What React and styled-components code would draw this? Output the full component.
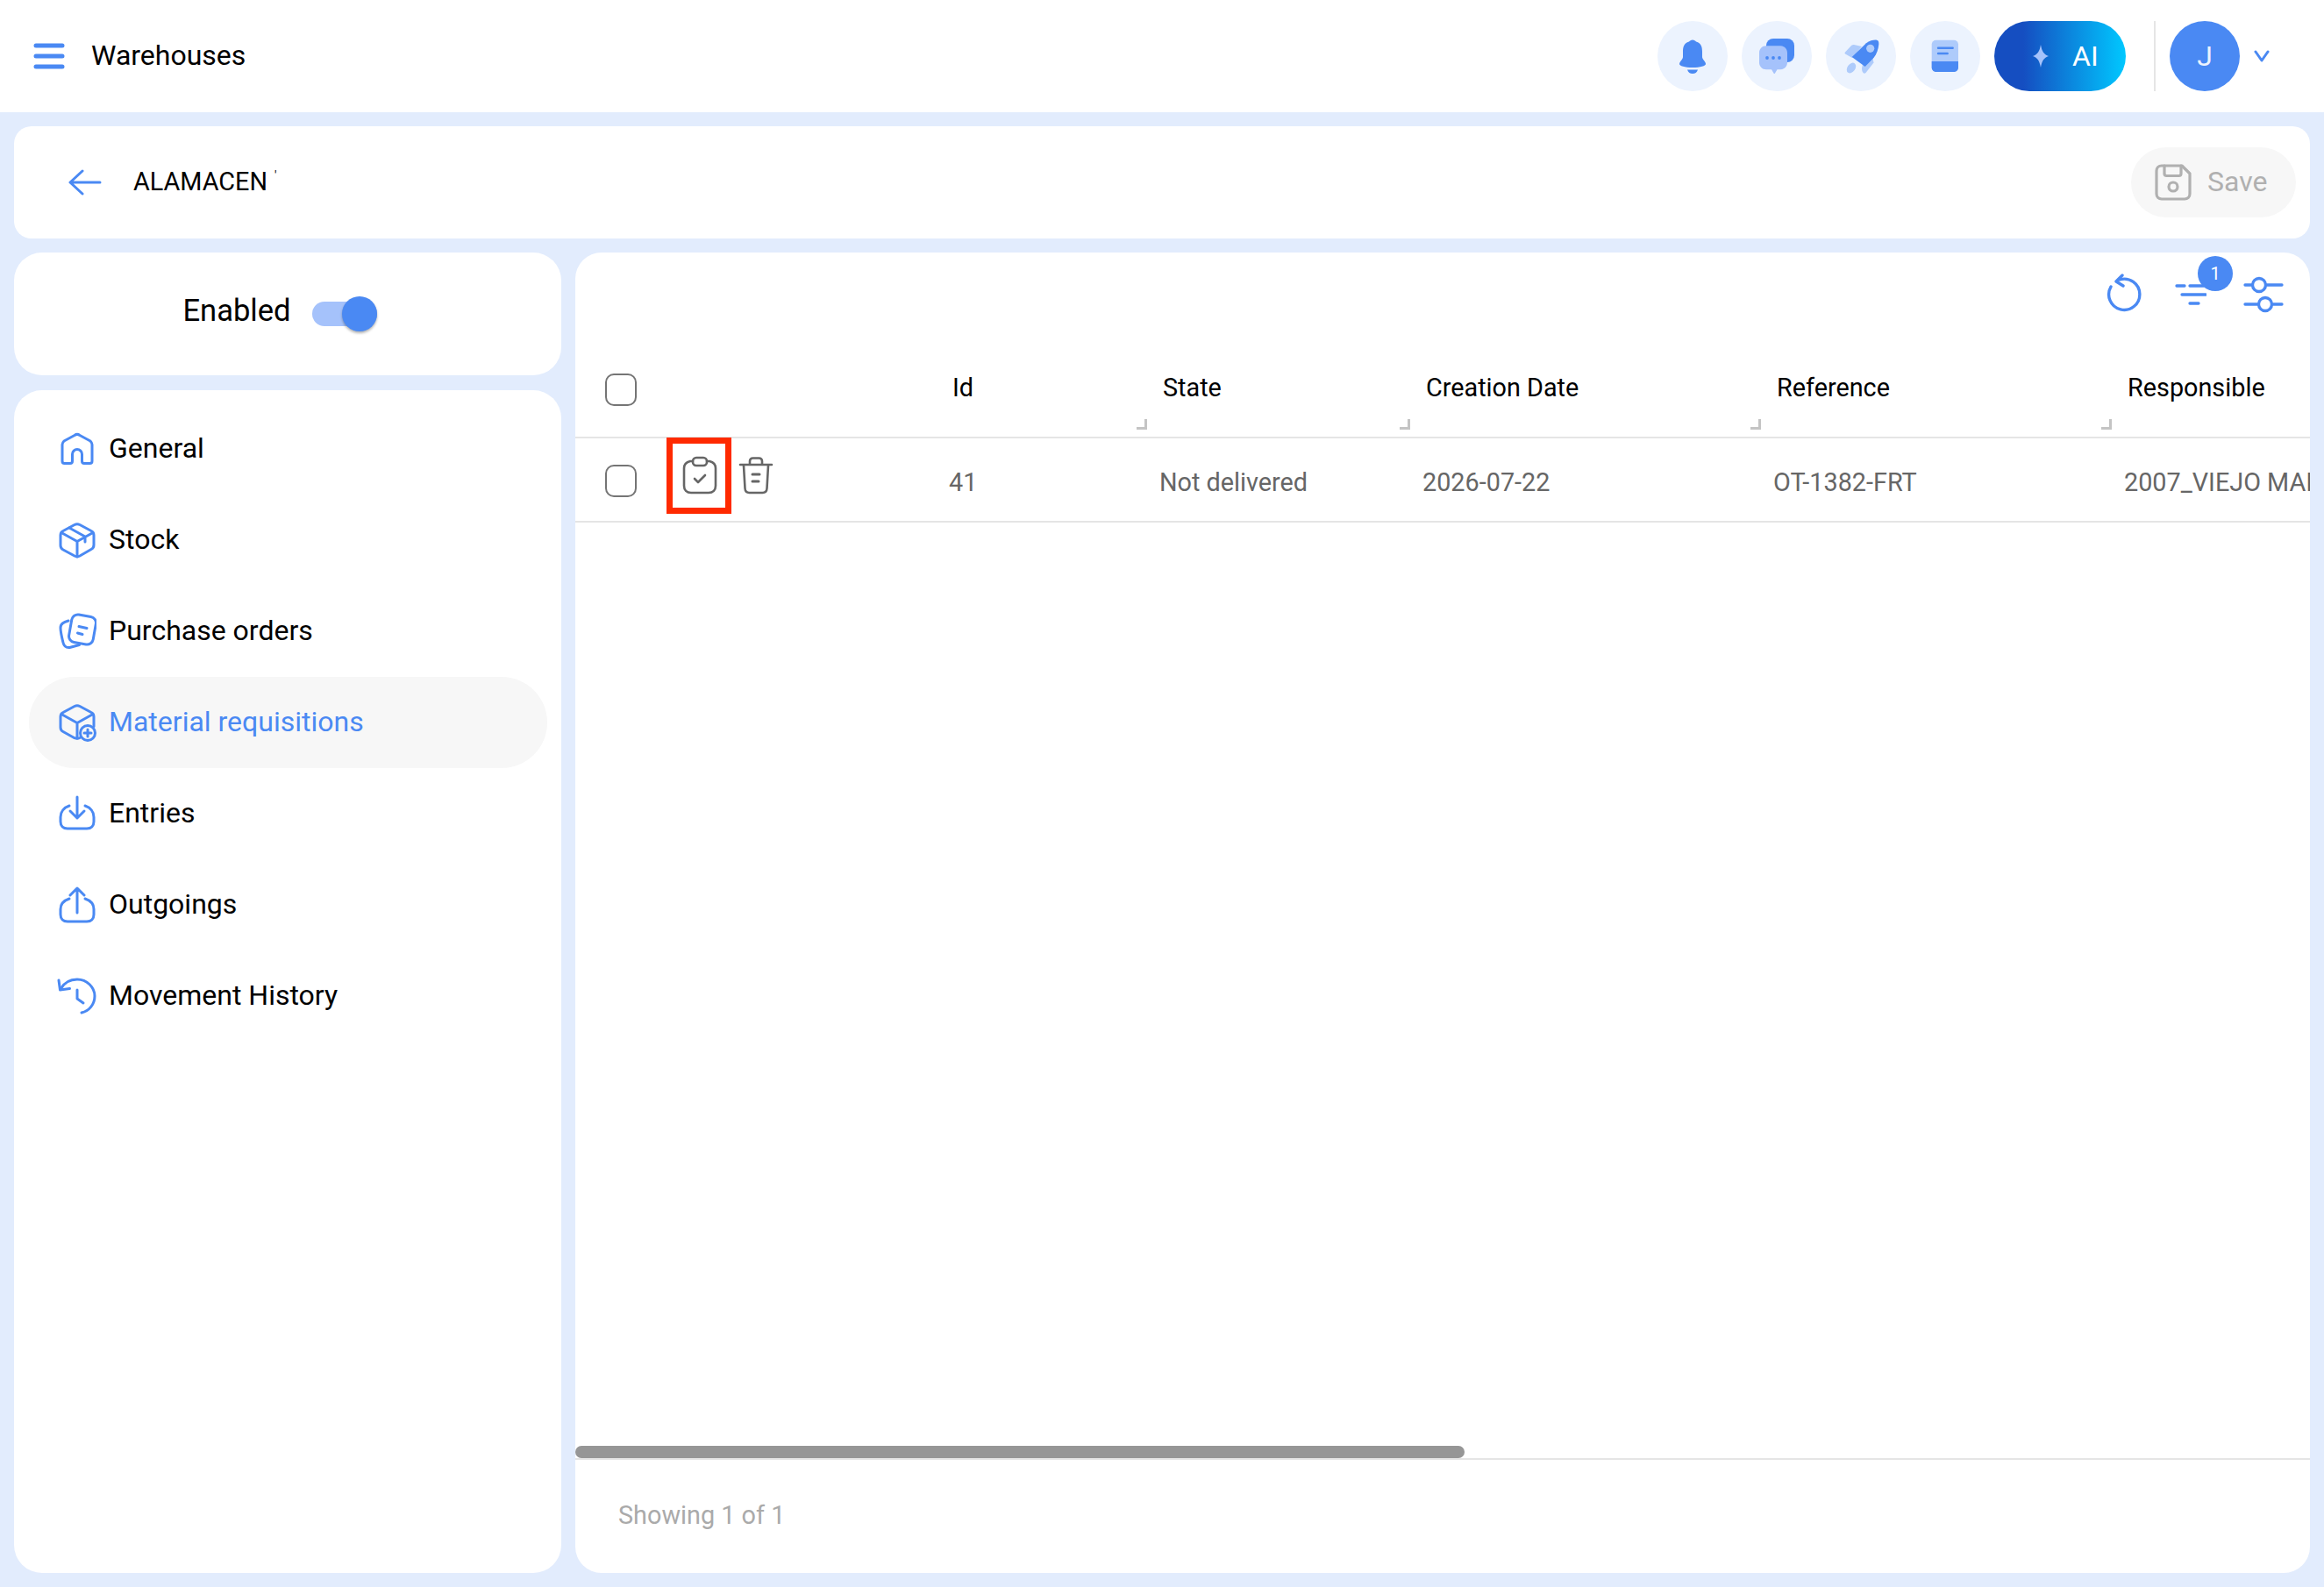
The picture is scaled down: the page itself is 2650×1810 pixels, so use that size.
import React from "react";
import styled, { createGlobalStyle } from "styled-components";

const BLUE = "#4a89f3";
const LIGHT = "#a5c2fb";

const Global = createGlobalStyle`
  html, body { margin: 0; padding: 0; background: #e2ecfd; }
  body { font-family: Roboto, "Liberation Sans", sans-serif; color: #000; }
  * { box-sizing: border-box; }
`;

const Page = styled.div`
  width: 2650px;
  height: 1810px;
  display: flex;
  flex-direction: column;
  overflow: hidden;
  background: #e2ecfd;
`;
const TopBar = styled.header`
  height: 128px;
  flex: none;
  background: #fff;
  display: flex;
  align-items: center;
  padding: 0 0 0 38px;
`;
const Title = styled.div`
  font-size: 32px;
  line-height: 40px;
  margin-left: 30px;
  margin-top: -2px;
`;
const Actions = styled.div`
  margin-left: auto;
  display: flex;
  align-items: center;
  gap: 16px;
  padding-right: 62px;
`;
const RoundBtn = styled.div`
  width: 80px;
  height: 80px;
  border-radius: 50%;
  background: #ecf3fe;
  display: flex;
  align-items: center;
  justify-content: center;
`;
const AiBtn = styled.div`
  width: 150px;
  height: 80px;
  border-radius: 40px;
  background: linear-gradient(90deg, #154ec1 22%, #00c8ff 100%);
  color: #fff;
  font-size: 32px;
  display: flex;
  align-items: center;
  padding-left: 43px;
  gap: 26px;
`;
const Divider = styled.div`
  width: 2px;
  height: 80px;
  background: #e5e5e5;
  margin-left: 16px;
`;
const Avatar = styled.div`
  width: 80px;
  height: 80px;
  border-radius: 50%;
  background: ${BLUE};
  color: #ecf3fe;
  font-size: 32px;
  display: flex;
  align-items: center;
  justify-content: center;
`;
const HeaderCard = styled.div`
  margin: 16px 16px 0;
  height: 128px;
  flex: none;
  background: #fff;
  border-radius: 20px;
  display: flex;
  align-items: center;
  padding: 0 16px 0 62px;
`;
const CardTitle = styled.div`
  font-size: 28.8px;
  margin-left: 36px;
  margin-top: -2px;
`;
const Tick = styled.span`
  font-size: 14px;
  margin-left: 8px;
  vertical-align: 12px;
`;
const SaveBtn = styled.div`
  margin-left: auto;
  width: 188px;
  height: 80px;
  border-radius: 40px;
  background: #f7f7f7;
  color: #b0b0b0;
  font-size: 32px;
  display: flex;
  align-items: center;
  padding-left: 27px;
  gap: 18px;
`;
const SaveLabel = styled.span`
  margin-top: -2px;
`;
const Main = styled.div`
  flex: none;
  height: 1506px;
  margin: 16px 16px 0;
  display: flex;
  gap: 16px;
`;
const Left = styled.div`
  width: 624px;
  flex: none;
  display: flex;
  flex-direction: column;
  gap: 17px;
`;
const EnabledCard = styled.div`
  height: 140px;
  flex: none;
  background: #fff;
  border-radius: 32px;
  display: flex;
  align-items: center;
  justify-content: center;
  gap: 24px;
  padding-right: 18px;
  padding-bottom: 8px;
  font-size: 34.56px;
`;
const Toggle = styled.div`
  width: 74px;
  height: 28px;
  border-radius: 14px;
  background: ${LIGHT};
  position: relative;
  margin-top: 8px;
`;
const Thumb = styled.div`
  position: absolute;
  right: 0;
  top: -6px;
  width: 40px;
  height: 40px;
  border-radius: 50%;
  background: ${BLUE};
  box-shadow: 0 2px 3px rgba(0, 0, 0, 0.3);
`;
const Nav = styled.nav`
  flex: 1;
  background: #fff;
  border-radius: 32px;
  padding: 15px 16px 14px 17px;
  display: flex;
  flex-direction: column;
`;
const NavItem = styled.div`
  height: 104px;
  flex: none;
  border-radius: 52px;
  display: flex;
  align-items: center;
  padding-left: 33px;
  gap: 14px;
  font-size: 32px;
  background: ${(p) => (p.$active ? "#f7f7f7" : "transparent")};
  color: ${(p) => (p.$active ? BLUE : "#000")};
`;
const NavIconBox = styled.div`
  width: 44px;
  height: 44px;
  flex: none;
  display: flex;
  align-items: center;
  justify-content: center;
`;
const NavLabel = styled.span`
  margin-top: -2px;
`;
const Panel = styled.section`
  flex: 1;
  min-width: 0;
  background: #fff;
  border-radius: 30px;
  display: flex;
  flex-direction: column;
  overflow: hidden;
`;
const Tools = styled.div`
  height: 112px;
  flex: none;
  display: flex;
  align-items: flex-start;
  padding: 24px 30px 0 0;
  justify-content: flex-end;
`;
const ToolIcon = styled.div`
  position: relative;
  margin-left: ${(p) => p.$ml}px;
  height: 48px;
  display: flex;
  align-items: center;
`;
const Badge = styled.div`
  position: absolute;
  left: 26px;
  top: -20px;
  width: 40px;
  height: 40px;
  border-radius: 50%;
  background: ${BLUE};
  color: #fff;
  font-size: 20px;
  display: flex;
  align-items: center;
  justify-content: center;
`;
const Table = styled.div`
  flex: 1;
  min-height: 0;
  overflow: hidden;
`;
const Row = styled.div`
  display: grid;
  grid-template-columns: 104px 310px 240px 300px 400px 400px 400px;
  width: 2354px;
  height: ${(p) => p.$h}px;
  border-bottom: 2px solid #e5e5e5;
`;
const Cell = styled.div`
  position: relative;
  display: flex;
  align-items: center;
  white-space: nowrap;
  font-size: 28.8px;
  color: ${(p) => (p.$head ? "#000" : "#666")};
  padding-left: ${(p) => (p.$head ? 16 : 12)}px;
  padding-bottom: ${(p) => (p.$head ? 14 : 0)}px;
  padding-top: ${(p) => (p.$head ? 0 : 6)}px;
`;
const CheckCell = styled.div`
  display: flex;
  align-items: center;
  padding-left: 34px;
  padding-bottom: ${(p) => (p.$head ? 10 : 0)}px;
  padding-top: ${(p) => (p.$head ? 0 : 2)}px;
`;
const Check = styled.div`
  width: 36px;
  height: 37px;
  border: 2px solid #757575;
  border-radius: 10px;
`;
const ActionCell = styled.div`
  position: relative;
  display: flex;
  align-items: flex-start;
  padding: 20px 0 0 18px;
  gap: 24px;
`;
const Highlight = styled.div`
  position: absolute;
  left: 0;
  top: -1px;
  width: 74px;
  height: 87px;
  border: 7px solid #ff2a00;
`;
const Grip = styled.div`
  position: absolute;
  right: ${(p) => p.$r || 2}px;
  bottom: 8px;
  width: 12px;
  height: 12px;
  border-right: 3px solid #c4c4c4;
  border-bottom: 3px solid #c4c4c4;
`;
const ScrollTrack = styled.div`
  height: 16px;
  flex: none;
  border-bottom: 2px solid #e5e5e5;
`;
const ScrollThumb = styled.div`
  width: 1014px;
  height: 14px;
  border-radius: 7px;
  background: #969696;
`;
const Foot = styled.div`
  height: 129px;
  flex: none;
  padding: 0 0 3px 49px;
  display: flex;
  align-items: center;
  font-size: 28.8px;
  color: #aaa;
`;

const S = styled.svg.attrs((p) => ({
  width: p.$w,
  height: p.$h || p.$w,
  viewBox: p.$vb || `0 0 ${p.$w} ${p.$h || p.$w}`,
  fill: "none",
  stroke: p.$c || BLUE,
  strokeWidth: p.$sw || 3,
  strokeLinecap: "round",
  strokeLinejoin: "round",
}))`
  flex: none;
  display: block;
`;

const Burger = () => (
  <S $w={36} $h={30} $sw={5}>
    <path d="M3 3h30M3 15h30M3 27h30" />
  </S>
);
const Bell = () => (
  <svg width="48" height="48" viewBox="0 0 48 48" fill={BLUE}>
    <path d="M24 5.5c-2 0-3 1-4 2C14 9 13 14 13 19v6c0 3-4 5-4 8 0 2 6 4 15 4s15-2 15-4c0-3-4-5-4-8v-6c0-5-1-10-7-11.5-1-1-2-2-4-2z" />
    <path d="M18 39.5h12c-1 3-3 4.500-6 4.500s-5-1.500-6-4.500z" />
  </svg>
);
const Chat = () => (
  <svg width="48" height="48" viewBox="0 0 48 48">
    <rect x="12" y="4" width="32" height="27" rx="8" fill={BLUE} />
    <path d="M12 12.300h16c4.500 0 8 3.500 8 8v11c0 4.500-3.500 8-8 8h-3.500l-2.500 4.200c-.5.700-1 .7-1.500 0l-2.500-4.200H12c-4.500 0-8-3.500-8-8v-11c0-4.500 3.500-8 8-8z" fill={LIGHT} />
    <circle cx="13" cy="26" r="1.900" fill={BLUE} />
    <circle cx="20" cy="26" r="1.900" fill={BLUE} />
    <circle cx="27" cy="26" r="1.900" fill={BLUE} />
  </svg>
);
const Rocket = () => (
  <svg width="48" height="48" viewBox="0 0 48 48">
    <path d="M6 19.500l7-7.500c1-1 2-1 3-1l9 2-11 13-7-4c-1.500-.8-2-1.600-1-2.500z" fill="#aecbfb" />
    <path d="M37 24l1.500 7.500-9 11.500c-1 1-2 1-3 0-1-1-1.500-3-1.500-5l1-5z" fill="#aecbfb" />
    <ellipse cx="13" cy="37.500" rx="4.500" ry="6.500" transform="rotate(35 13 37.500)" fill="#aecbfb" />
    <path d="M13.700 25L30 9.300c4-3 9-4 12-3.600 2 .3 2.500 2 2.300 5-.4 5-2.500 11-5.600 15L28.700 36z" fill={BLUE} />
    <circle cx="34.700" cy="15.300" r="4.600" fill="#aecbfb" />
  </svg>
);
const Book = () => (
  <svg width="48" height="48" viewBox="0 0 48 48">
    <rect x="8.700" y="5.700" width="30.300" height="36.300" rx="5" fill="#aecbfb" />
    <path d="M8.700 30H39v7c0 2.800-2.200 5-5 5H13.700c-2.800 0-5-2.200-5-5z" fill={BLUE} />
    <path d="M16 14.700h16.700M16 21h10.700" stroke={BLUE} strokeWidth="2.400" strokeLinecap="round" />
  </svg>
);
const Spark = () => (
  <svg width="20" height="28" viewBox="0 0 20 28" fill={LIGHT}>
    <path d="M10 1c1.500 8 3.500 11 9 13-5.500 2-7.500 5-9 13-1.500-8-3.500-11-9-13 5.500-2 7.500-5 9-13z" />
  </svg>
);
const Chevron = () => (
  <S $w={18} $h={14} $sw={3}>
    <path d="M2 2l7 10 7-10" />
  </S>
);
const Back = () => (
  <S $w={38} $h={30} $sw={3}>
    <path d="M16 2L2 15l14 13M2 15h34" />
  </S>
);
const Floppy = () => (
  <S $w={42} $c="#b0b0b0" $sw={3.200}>
    <path d="M8 2h23l9 9v23c0 3.500-2.500 6-6 6H8c-3.500 0-6-2.500-6-6V8c0-3.500 2.500-6 6-6z" />
    <path d="M11 2v9c0 1.500 1 2.500 2.500 2.500h14c1.500 0 2.500-1 2.500-2.500V2" />
    <circle cx="21" cy="26" r="5" />
  </S>
);
const Home = () => (
  <S $w={44}>
    <path d="M5 17c0-2 1-3 2-4L19 6.500c2-1.500 4-1.500 6 0L37 13c1 1 2 2 2 4v19c0 1.500-1 2.500-2.500 2.500H30c-1.500 0-2.500-1-2.500-2.500v-8c0-3-2.500-5.500-5.500-5.500S16.500 25 16.500 28v8c0 1.500-1 2.500-2.500 2.500H7.500C6 38.500 5 37.500 5 36z" />
  </S>
);
const Cube = () => (
  <S $w={44}>
    <path d="M19 4.500c2-1 4-1 6 0l13 7c2 1 3 2.500 3 5v11c0 2.500-1 4-3 5l-13 7.500c-2 1-4 1-6 0L6 33c-2-1-3-2.500-3-5V16.500c0-2.500 1-4 3-5z" />
    <path d="M4 13.500l18 10 18-10M22 23.500V41M13 8l18 10v6" />
  </S>
);
const Orders = () => (
  <S $w={44}>
    <rect x="14" y="4" width="28" height="32" rx="7" transform="rotate(10 28 20)" />
    <path d="M12 10c-5 1.500-9 3-9 8 0 4 1.500 11 3 17 1 4 3.500 6 7.500 5.500l11-3" />
    <path d="M24 16.500l9 2M22.500 24l5.500 1.500" />
  </S>
);
const CubePlus = () => (
  <S $w={46}>
    <path d="M26 40.500c-2 1-4 1-6 .2L7 33.500c-2-1-3-2.500-3-5V16.500c0-2.500 1-4 3-5L20 4.500c2-1 4-1 6 0l13 7c2 1 3 2.500 3 5v11" />
    <path d="M5 13.500l18 10 18-10M23 23.500V41" />
    <circle cx="35" cy="35" r="8.500" fill="#f7f7f7" />
    <path d="M35 31v8M31 35h8" />
  </S>
);
const Inbox = () => (
  <S $w={44}>
    <path d="M13 13C7 15 3 20 3 26v5c0 5 3 8 8 8h22c5 0 8-3 8-8v-5c0-6-4-11-10-13" />
    <path d="M22 3v24M14 19l8 8 8-8" />
  </S>
);
const Outbox = () => (
  <S $w={44}>
    <path d="M13 15C7 17 3 21 3 27v6c0 5 3 8 8 8h22c5 0 8-3 8-8v-6c0-6-4-10-10-12" />
    <path d="M22 31V3M14 11l8-8 8 8" />
  </S>
);
const History = () => (
  <S $w={48}>
    <path d="M5 16C9 9 16 5 24 5c11 0 20 9 20 19 0 9-6 17-15 19" />
    <path d="M3 6l1.500 11 11-1.500" />
    <path d="M24 17v10l7 5" />
  </S>
);
const Reload = () => (
  <S $w={40} $h={48} $sw={3.400}>
    <path d="M5 15A17.600 17.600 0 1 0 15 7" />
    <path d="M18 2l-7 7 8 5" />
  </S>
);
const Filter = () => (
  <S $w={36} $h={26} $sw={3.300}>
    <path d="M2 3h9M17 3h16M8 13h27M17 23h10" />
  </S>
);
const Sliders = () => (
  <S $w={46} $h={42} $sw={3.300}>
    <path d="M2 10h8M26 10h18M2 32h15M33 32h11" />
    <circle cx="18" cy="10" r="7.500" />
    <circle cx="25" cy="32" r="7.500" />
  </S>
);
const Clip = () => (
  <S $w={40} $h={44} $c="#666" $sw={2.600}>
    <path d="M12 6H9C5 7 2 10 2 14v20c0 5 3 8 8 8h20c5 0 8-3 8-8V14c0-4-3-7-7-8h-3" />
    <rect x="12" y="2" width="16" height="9" rx="4" />
    <path d="M14 26l4 4 8-8" />
  </S>
);
const Trash = () => (
  <S $w={40} $h={44} $c="#666" $sw={2.600}>
    <path d="M2 10h36M13 9V6c0-2 1.500-3.500 3.500-3.500h7C25.500 2.500 27 4 27 6v3" />
    <path d="M6 11l1.500 26c.2 3 2 5 5 5h15c3 0 4.800-2 5-5L34 11" />
    <path d="M16 21h8M16 29h7" strokeWidth="3" />
  </S>
);

const items = [
  ["General", Home],
  ["Stock", Cube],
  ["Purchase orders", Orders],
  ["Material requisitions", CubePlus, true],
  ["Entries", Inbox],
  ["Outgoings", Outbox],
  ["Movement History", History],
];
const headers = ["State", "Creation Date", "Reference", "Responsible"];
const values = ["Not delivered", "2026-07-22", "OT-1382-FRT", "2007_VIEJO MAIN"];
const grips = [2, 2, 0, 0];

export default function App() {
  return (
    <Page>
      <Global />
      <TopBar>
        <Burger />
        <Title>Warehouses</Title>
        <Actions>
          <RoundBtn><Bell /></RoundBtn>
          <RoundBtn><Chat /></RoundBtn>
          <RoundBtn><Rocket /></RoundBtn>
          <RoundBtn><Book /></RoundBtn>
          <AiBtn><Spark />AI</AiBtn>
          <Divider />
          <Avatar>J</Avatar>
          <Chevron />
        </Actions>
      </TopBar>
      <HeaderCard>
        <Back />
        <CardTitle>ALAMACEN<Tick>'</Tick></CardTitle>
        <SaveBtn><Floppy /><SaveLabel>Save</SaveLabel></SaveBtn>
      </HeaderCard>
      <Main>
        <Left>
          <EnabledCard>
            Enabled
            <Toggle><Thumb /></Toggle>
          </EnabledCard>
          <Nav>
            {items.map(([label, Icon, active]) => (
              <NavItem key={label} $active={active}>
                <NavIconBox><Icon /></NavIconBox>
                <NavLabel>{label}</NavLabel>
              </NavItem>
            ))}
          </Nav>
        </Left>
        <Panel>
          <Tools>
            <ToolIcon><Reload /></ToolIcon>
            <ToolIcon $ml={38}>
              <Filter />
              <Badge>1</Badge>
            </ToolIcon>
            <ToolIcon $ml={42}><Sliders /></ToolIcon>
          </Tools>
          <Table>
            <Row $h={100}>
              <CheckCell $head><Check /></CheckCell>
              <div />
              <Cell $head>Id<Grip /></Cell>
              {headers.map((h, i) => (
                <Cell $head key={h}>
                  {h}
                  {i < 3 && <Grip $r={grips[i]} />}
                </Cell>
              ))}
            </Row>
            <Row $h={96}>
              <CheckCell><Check /></CheckCell>
              <ActionCell>
                <Clip />
                <Trash />
                <Highlight />
              </ActionCell>
              <Cell>41</Cell>
              {values.map((v) => (
                <Cell key={v}>{v}</Cell>
              ))}
            </Row>
          </Table>
          <ScrollTrack><ScrollThumb /></ScrollTrack>
          <Foot>Showing 1 of 1</Foot>
        </Panel>
      </Main>
    </Page>
  );
}
